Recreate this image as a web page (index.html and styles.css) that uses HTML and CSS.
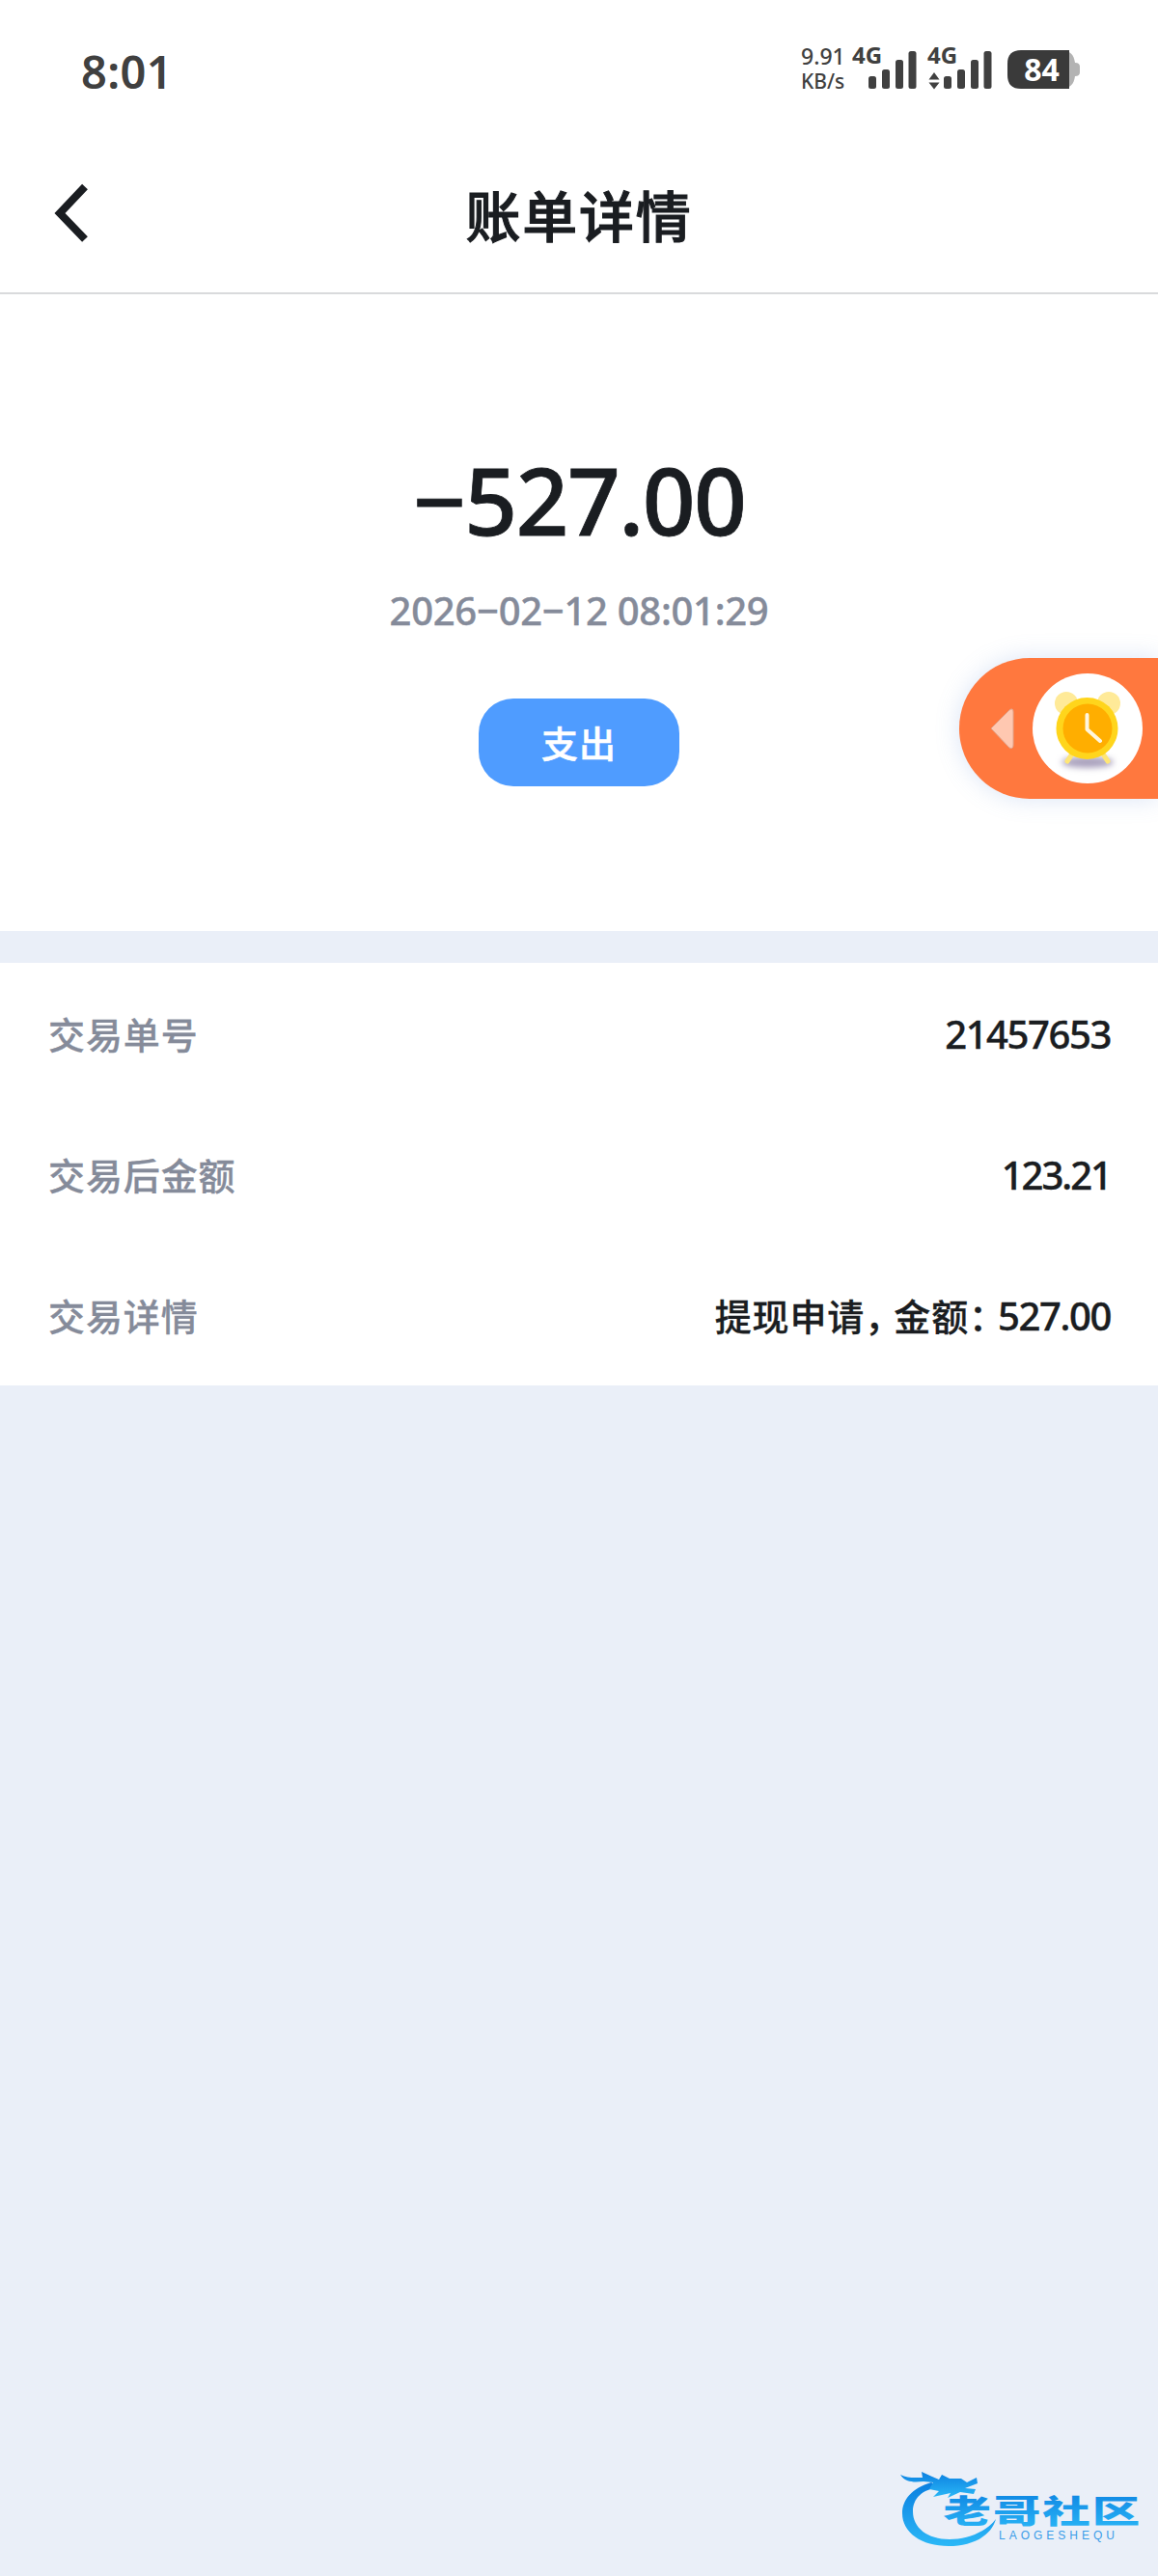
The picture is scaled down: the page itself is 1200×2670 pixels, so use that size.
FILE: index.html
```
<!DOCTYPE html>
<html lang="zh-CN">
<head>
    <meta charset="UTF-8">
    <meta name="viewport" content="width=device-width, initial-scale=1.0">
    <title>账单详情</title>
    <link rel="stylesheet" href="styles.css">
</head>
<body>
    <!-- Status bar -->
    <div class="status-bar">
        <span class="clock">8:01</span>
        <div class="status-right">
            <div class="net-speed">
                <span class="speed">9.91</span>
                <span class="unit">KB/s</span>
            </div>
            <svg class="signal" width="68" height="44" viewBox="0 0 68 44">
                <text x="0" y="18">4G</text>
                <rect x="17" y="31" width="8" height="13" rx="2.5"/>
                <rect x="31" y="24" width="8" height="20" rx="2.5"/>
                <rect x="45" y="14" width="8" height="30" rx="2.5"/>
                <rect x="58.500" y="5" width="8" height="39" rx="2.500"/>
            </svg>
            <svg class="signal second" width="68" height="44" viewBox="0 0 68 44">
                <text x="0" y="18">4G</text>
                <path d="M1.500 34.500 L7 27 L12.500 34.500 Z M1.500 37.500 H12.500 L7 44.500 Z"/>
                <rect x="17" y="31" width="8" height="13" rx="2.5"/>
                <rect x="31" y="24" width="8" height="20" rx="2.5"/>
                <rect x="45" y="14" width="8" height="30" rx="2.5"/>
                <rect x="58.500" y="5" width="8" height="39" rx="2.500"/>
            </svg>
            <svg class="battery" width="76" height="40" viewBox="0 0 76 40">
                <path class="battery-rest" d="M55 0 C65 0 69 5 70 13 Q75 13 75 17 V23 Q75 27 70 27 C69 35 65 40 55 40 Z"/>
                <path class="battery-fill" d="M14 0 H64 V40 H14 Q0 40 0 26 V14 Q0 0 14 0 Z"/>
                <text x="35.500" y="31.500" text-anchor="middle">84</text>
            </svg>
        </div>
    </div>

    <!-- Title bar -->
    <header class="nav-bar">
        <svg class="back" width="36" height="62" viewBox="0 0 36 62">
            <path d="M31 3.500 L5 31 L31 58"/>
        </svg>
        <h1>账单详情</h1>
    </header>

    <section class="summary">
        <div class="amount">−527.00</div>
        <div class="date">2026−02−12 08:01:29</div>
        <div class="type">支出</div>
    </section>

    <section class="details">
        <div class="row">
            <span class="label">交易单号</span>
            <span class="value">21457653</span>
        </div>
        <div class="row">
            <span class="label">交易后金额</span>
            <span class="value balance">123.21</span>
        </div>
        <div class="row">
            <span class="label">交易详情</span>
            <span class="value"><span class="cjk">提现申请<span class="punct">，</span>金额<span class="punct">：</span></span>527.00</span>
        </div>
    </section>

    <!-- Floating timer tab -->
    <div class="float-tab">
        <svg width="206" height="146" viewBox="0 0 206 146">
            <defs>
                <filter id="soft" x="-30%" y="-100%" width="160%" height="300%">
                    <feGaussianBlur stdDeviation="3"/>
                </filter>
            </defs>
            <path d="M33 73 L52 54 Q56 51 56 56 V90 Q56 95 52 93 Z" fill="#ffc8b1" stroke="#e0a48c" stroke-width="1"/>
            <circle cx="133" cy="73" r="57" fill="#fff"/>
            <ellipse cx="133" cy="108" rx="27" ry="6" fill="#aaa2bd" filter="url(#soft)"/>
            <circle cx="111" cy="47" r="12" fill="#ffea98"/>
            <circle cx="155" cy="47" r="12" fill="#ffea98"/>
            <path d="M116 101 L112 107 M150 101 L154 107" stroke="#ffe675" stroke-width="5" stroke-linecap="round"/>
            <circle cx="132.500" cy="73" r="32" fill="#ffd51c"/>
            <circle cx="133" cy="73" r="25.500" fill="#ffae00"/>
            <path d="M132.500 59 V74 L146 86" fill="none" stroke="#fff6df" stroke-width="4" stroke-linecap="round" stroke-linejoin="round"/>
        </svg>
    </div>

    <!-- Community logo -->
    <div class="watermark">
        <svg width="250" height="84" viewBox="0 0 250 84">
            <defs>
                <linearGradient id="ring" x1="0" y1="0" x2="0" y2="1">
                    <stop offset="0" stop-color="#0b7fe0"/>
                    <stop offset="1" stop-color="#2bb8f7"/>
                </linearGradient>
            </defs>
            <g fill="url(#ring)">
                <path d="M35 15 C15 21 5 33 5 47 C5 67 25 81 53 81 C77 81 97 71 102 53 C91 67 72 74 54 74 C31 74 16 62 16 45 C16 32 25 22 44 20 Z"/>
                <path d="M3 7 C10 11 19 10 26 10 L25 4 L36 9 L43 12 L46 7 L54 11 L66 11 L72 15 L82 10 L83 16 L70 21 L81 22 L79 27 L65 25 L52 31 L55 26 L37 30 L43 24 L33 22 L37 15 L27 14 C17 15 8 15 3 7 Z"/>
            </g>
            <text class="logo-name" transform="translate(47.500 57) scale(1.500 1)" fill="url(#ring)">老哥社区</text>
            <text class="logo-sub" x="105" y="74">LAOGESHEQU</text>
        </svg>
    </div>
</body>
</html>
```
FILE: styles.css
```
* {
    box-sizing: border-box;
}

body {
    margin: 0;
    min-height: 2670px;
    background-color: #eaeff8;
    font-family: "Noto Sans", "Noto Sans CJK SC", sans-serif;
    font-weight: 500;
    color: #1a1d21;
}

svg {
    overflow: visible;
}

/* Status bar */
.status-bar {
    display: flex;
    justify-content: space-between;
    height: 150px;
    padding: 48px 80px 0 84px;
    background-color: #fff;
    color: #404040;
}

.clock {
    font-size: 47px;
    font-weight: 600;
    line-height: 52px;
    letter-spacing: 0.3px;
}

.status-right {
    display: flex;
    align-items: flex-start;
}

.net-speed {
    display: flex;
    flex-direction: column;
    width: 53px;
    font-size: 23px;
    line-height: 21px;
}

.unit {
    font-size: 21px;
    line-height: 31px;
}

.signal {
    display: block;
    fill: #404040;
    font-size: 24px;
    font-weight: 700;
}

.second {
    margin-left: 10px;
}

.battery {
    display: block;
    margin: 4px 0 0 15px;
    font-size: 32px;
    font-weight: 700;
}

.battery-rest {
    fill: #b3b3b3;
}

.battery-fill {
    fill: #3a3a3a;
}

.battery text {
    fill: #fff;
}

/* Title bar */
.nav-bar {
    display: grid;
    grid-template-columns: 200px 1fr 200px;
    align-items: center;
    height: 155px;
    padding-bottom: 12px;
    background-color: #fff;
    border-bottom: 2px solid #d9dadc;
}

.back {
    margin-left: 57px;
    fill: none;
    stroke: #1a1d21;
    stroke-width: 8;
}

h1 {
    margin: 0;
    font-family: "Noto Sans CJK SC", sans-serif;
    font-size: 57px;
    font-weight: 500;
    line-height: 78px;
    letter-spacing: 1.7px;
    text-align: center;
    -webkit-text-stroke: 1.1px #1a1d21;
}

/* Amount block */
.summary {
    display: flex;
    flex-direction: column;
    align-items: center;
    height: 660px;
    padding-top: 158px;
    background-color: #fff;
}

.amount {
    font-size: 96px;
    line-height: 110px;
    letter-spacing: -1.6px;
    -webkit-text-stroke: 0.8px #1a1d21;
}

.date {
    margin-top: 30px;
    font-size: 40px;
    line-height: 60px;
    letter-spacing: -0.3px;
    color: #858b9a;
    -webkit-text-stroke: 0.4px #858b9a;
}

.type {
    width: 208px;
    height: 91px;
    margin-top: 61px;
    border-radius: 36px;
    background-color: #4f9cff;
    color: #fff;
    font-family: "Noto Sans CJK SC", sans-serif;
    font-size: 38px;
    line-height: 89px;
    letter-spacing: 1px;
    text-align: center;
    -webkit-text-stroke: 0.5px #fff;
}

/* Detail rows */
.details {
    margin-top: 33px;
    background-color: #fff;
}

.row {
    display: flex;
    justify-content: space-between;
    align-items: center;
    height: 146px;
    padding: 0 49px 0 50px;
}

.label {
    padding-bottom: 2px;
    font-family: "Noto Sans CJK SC", sans-serif;
    font-size: 38px;
    letter-spacing: 0.9px;
    color: #858b9a;
    -webkit-text-stroke: 0.3px #858b9a;
}

.value {
    font-size: 40px;
    letter-spacing: -1.4px;
    -webkit-text-stroke: 0.4px #1a1d21;
}

.balance {
    letter-spacing: -2px;
}

.cjk {
    font-family: "Noto Sans CJK SC", sans-serif;
    font-size: 38px;
    letter-spacing: 0.9px;
    -webkit-text-stroke: 0.3px #1a1d21;
}

.punct {
    letter-spacing: -8px;
}

/* Floating tab */
.float-tab {
    position: absolute;
    top: 682px;
    right: 0;
    width: 206px;
    height: 146px;
    border-radius: 73px 0 0 73px;
    background-color: #ff783e;
    box-shadow: 0 0 24px rgba(110, 150, 220, 0.25);
}

/* Logo */
.watermark {
    position: absolute;
    right: 20px;
    bottom: 28px;
    width: 250px;
    height: 84px;
}

.logo-name {
    font-family: "Noto Sans CJK SC", sans-serif;
    font-size: 33px;
    font-weight: 900;
    letter-spacing: 1.3px;
}

.logo-sub {
    font-family: "Liberation Sans", sans-serif;
    font-size: 12px;
    font-weight: 400;
    letter-spacing: 4px;
    fill: #3a9de8;
}
```
